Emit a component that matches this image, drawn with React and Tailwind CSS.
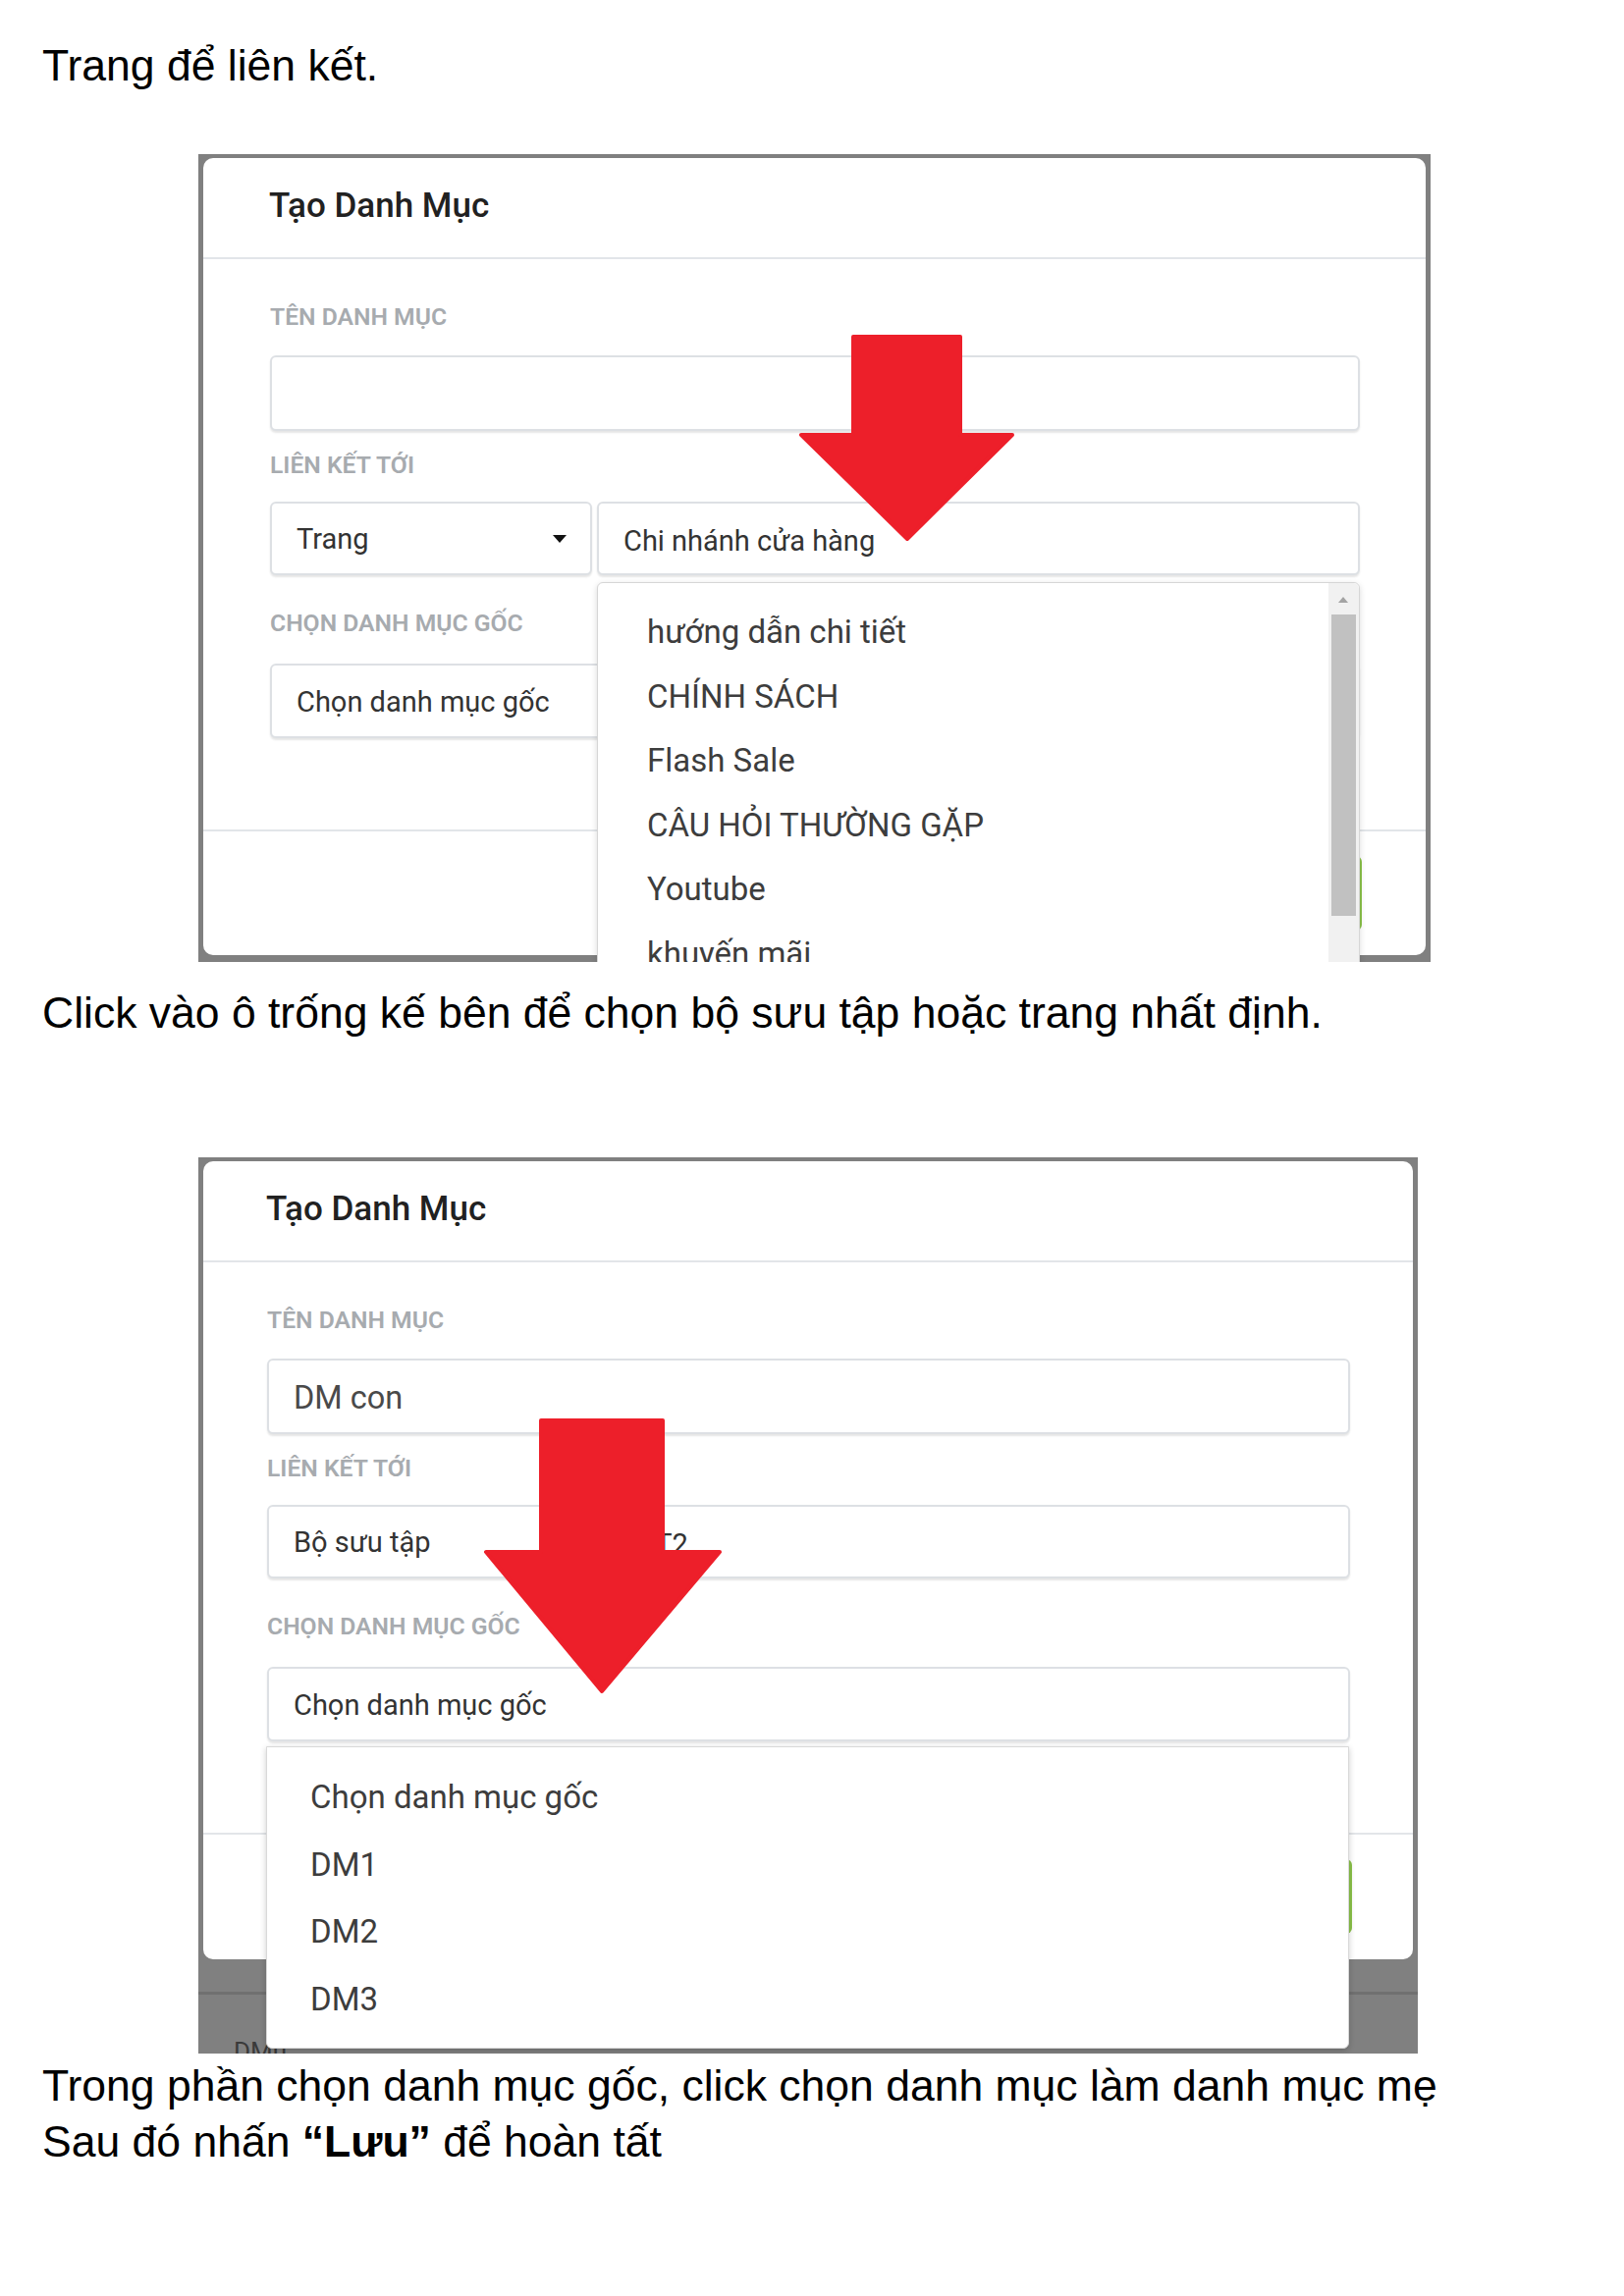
import React from "react";

const boxCls =
  "flex items-center border-2 border-[#dde0e4] rounded-[6px] bg-white shadow-[0_2px_2px_rgba(0,0,0,0.10)] pl-[25px] pt-[3px] text-[29px] text-[#333333]";

function Label({ children }) {
  return (
    <div className="h-[30px] leading-[30px] text-[24.7px] font-semibold text-[#a7abaf]">
      {children}
    </div>
  );
}

function Caret() {
  return (
    <svg width="14" height="8" viewBox="0 0 14 8" className="ml-auto mr-[24px] -mt-[3px]">
      <polygon points="0,0 14,0 7,8" fill="#111111" />
    </svg>
  );
}

function Arrow1() {
  return (
    <svg
      width="221"
      height="212"
      viewBox="0 0 221 212"
      className="absolute left-[611px] top-[184px]"
    >
      <polygon
        points="56,2 165,2 165,102 218,102 111,208 3,102 56,102"
        fill="#ed1f2a"
        stroke="#ed1f2a"
        strokeWidth="4"
        strokeLinejoin="round"
      />
    </svg>
  );
}

function Arrow2() {
  return (
    <svg
      width="244"
      height="281"
      viewBox="0 0 244 281"
      className="absolute left-[290px] top-[266px]"
    >
      <polygon
        points="59,2 183,2 183,136 241,136 121,278 3,136 59,136"
        fill="#ed1f2a"
        stroke="#ed1f2a"
        strokeWidth="4"
        strokeLinejoin="round"
      />
    </svg>
  );
}

function Modal({ v }) {
  const s1 = v === 1;
  return (
    <div
      className={`relative overflow-hidden bg-[#808080] pt-[4px] pl-[5px] font-['Roboto',sans-serif] ${
        s1 ? "w-[1255px] h-[823px]" : "w-[1242px] h-[913px]"
      }`}
    >
      <div
        className={`flex flex-col bg-white rounded-[10px] ${
          s1 ? "w-[1245px] h-[812px]" : "w-[1232px] h-[813px]"
        }`}
      >
        <div
          className={`h-[103px] border-b-2 border-[#e2e5e9] pt-[28px] text-[35px] leading-[41px] font-medium text-[#212121] ${
            s1 ? "pl-[67px]" : "pl-[64px]"
          }`}
        >
          Tạo Danh Mục
        </div>
        <div
          className={`flex flex-col pt-[44px] pb-[93px] border-b-2 border-[#e2e5e9] ${
            s1 ? "pl-[68px] pr-[67px]" : "pl-[65px] pr-[64px]"
          }`}
        >
          <Label>TÊN DANH MỤC</Label>
          <div className={`${boxCls} mt-[24px] h-[77px]`}>
            {s1 ? null : <span className="text-[32.5px] text-[#4a4a4a]">DM con</span>}
          </div>
          <div className="mt-[20px]">
            <Label>LIÊN KẾT TỚI</Label>
          </div>
          <div className="mt-[22px] flex h-[75px] gap-[5px]">
            <div className={`${boxCls} w-[328px] h-[75px] shrink-0`}>
              <span>{s1 ? "Trang" : "Bộ sưu tập"}</span>
              <Caret />
            </div>
            <div className={`${boxCls} flex-1 h-[75px]`}>
              <span className="pt-[4px]">{s1 ? "Chi nhánh cửa hàng" : "BST2"}</span>
            </div>
          </div>
          <div className="mt-[34px]">
            <Label>CHỌN DANH MỤC GỐC</Label>
          </div>
          <div className={`${boxCls} mt-[26px] h-[76px]`}>
            <span>Chọn danh mục gốc</span>
          </div>
        </div>
        <div className={`flex justify-end pt-[25px] ${s1 ? "pr-[65px]" : "pr-[62px]"}`}>
          <div className="w-[150px] h-[76px] rounded-[6px] bg-[#8bc34a]" />
        </div>
      </div>

      {s1 ? null : (
        <>
          <div className="absolute left-0 right-0 top-[850px] h-[3px] bg-[#707070]" />
          <div className="absolute left-[36px] top-[896px] text-[26px] leading-[30px] text-[#3a3a3a]">
            DMu
          </div>
        </>
      )}

      {s1 ? (
        <div className="absolute left-[406px] top-[436px] w-[777px] h-[420px] bg-white border border-[#d6d6d6] rounded-t-[6px] shadow-[0_2px_6px_rgba(0,0,0,0.15)]">
          <div className="flex flex-col pt-[17px] pl-[50px] text-[33px] leading-[65.5px] text-[#3d3d3d]">
            <div>hướng dẫn chi tiết</div>
            <div>CHÍNH SÁCH</div>
            <div>Flash Sale</div>
            <div>CÂU HỎI THƯỜNG GẶP</div>
            <div>Youtube</div>
            <div>khuyến mãi</div>
          </div>
          <div className="absolute right-0 top-0 bottom-0 w-[31px] bg-[#f1f1f1] rounded-tr-[6px]">
            <svg
              width="10"
              height="6"
              viewBox="0 0 10 6"
              className="absolute left-[10px] top-[14px]"
            >
              <polygon points="0,6 10,6 5,0" fill="#a3a3a3" />
            </svg>
            <div className="absolute left-[3px] top-[32px] w-[25px] h-[307px] bg-[#c1c1c1]" />
          </div>
        </div>
      ) : (
        <div className="absolute left-[69px] top-[600px] w-[1103px] h-[308px] bg-white border border-[#d9d9d9] rounded-b-[6px] shadow-[0_2px_6px_rgba(0,0,0,0.2)]">
          <div className="flex flex-col pt-[17px] pl-[44px] text-[33px] leading-[68.5px] text-[#3d3d3d]">
            <div>Chọn danh mục gốc</div>
            <div>DM1</div>
            <div>DM2</div>
            <div>DM3</div>
          </div>
        </div>
      )}

      {s1 ? <Arrow1 /> : <Arrow2 />}
    </div>
  );
}

export default function App() {
  return (
    <div className="w-[1654px] min-h-[2339px] bg-white flex flex-col items-start font-['Liberation_Sans',Arial,sans-serif] text-black">
      <p className="pl-[43px] pt-[41px] text-[44.5px] leading-[52px]">Trang để liên kết.</p>
      <div className="ml-[202px] mt-[64px]">
        <Modal v={1} />
      </div>
      <p className="pl-[43px] mt-[26px] text-[44.5px] leading-[52px]">
        Click vào ô trống kế bên để chọn bộ sưu tập hoặc trang nhất định.
      </p>
      <div className="ml-[202px] mt-[121px]">
        <Modal v={2} />
      </div>
      <div className="pl-[43px] mt-[4px] text-[44.5px] leading-[57px]">
        <p>Trong phần chọn danh mục gốc, click chọn danh mục làm danh mục mẹ</p>
        <p>
          Sau đó nhấn <b>“Lưu”</b> để hoàn tất
        </p>
      </div>
    </div>
  );
}
